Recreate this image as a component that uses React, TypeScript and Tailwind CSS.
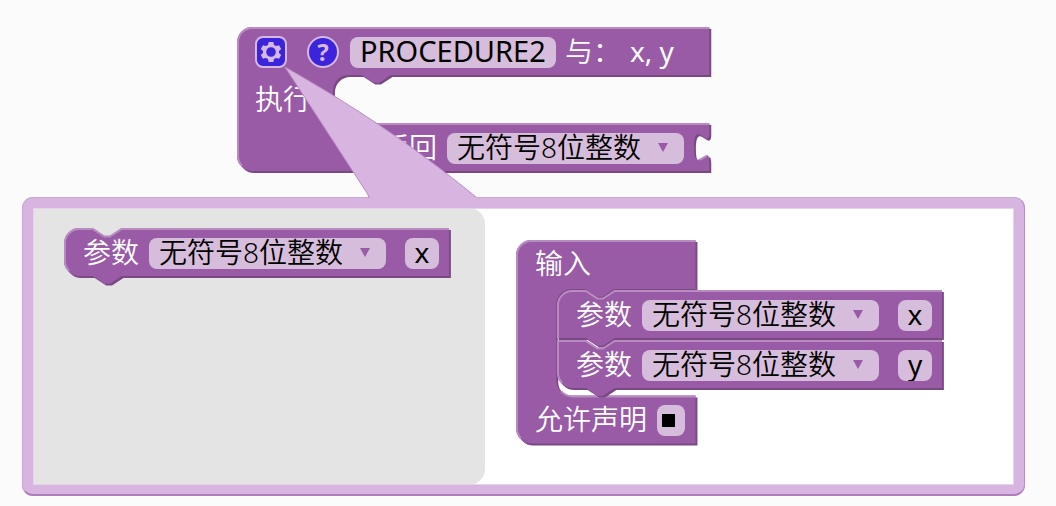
import React from "react";

const FILL = "#995ba5";
const LIGHT = "#b88cc1";
const DARK = "#7a4984";
const UNIT = 1.92;

type ShapeProps = { body: string; light: string };

function BlockShape({ body, light }: ShapeProps) {
  return (
    <svg aria-hidden="true" className="pointer-events-none absolute inset-0 size-full overflow-visible">
      <g transform={`scale(${UNIT})`}>
        <path d={body} fill={DARK} transform="translate(1,1)" />
        <path d={body} fill={FILL} />
        <path d={light} fill="none" stroke={LIGHT} strokeWidth="1" />
      </g>
    </svg>
  );
}

const NOTCH = "l 6,4 3,0 6,-4";
const NOTCH_BACK = "l -6,4 -3,0 -6,-4";
const TAB = "c 0,10 -8,-8 -8,7.5 s 8,-2.5 8,7.5";

const ROUND_PARAM = {
  body: `M 0,8 A 8,8 0 0 1 8,0 H 15 ${NOTCH} H 200.5 V 25 H 30 ${NOTCH_BACK} H 8 A 8,8 0 0 1 0,17 Z`,
  light: `M 2.7,22.3 A 7.5,7.5 0 0 1 0.5,17 V 8 A 7.5,7.5 0 0 1 8,0.5 H 15 ${NOTCH} H 200.5`,
};
const FIRST_PARAM = {
  body: `M 0,8 A 8,8 0 0 1 8,0 H 15 ${NOTCH} H 200.5 V 25 H 30 ${NOTCH_BACK} H 0 Z`,
  light: `M 0.5,25.5 V 8 A 7.5,7.5 0 0 1 8,0.5 H 15 ${NOTCH} H 200.5`,
};
const LAST_PARAM = {
  body: `M 0,0 H 15 ${NOTCH} H 200.5 V 25 H 30 ${NOTCH_BACK} H 8 A 8,8 0 0 1 0,17 Z`,
  light: `M 2.7,22.3 A 7.5,7.5 0 0 1 0.5,17 V 0.5 H 15 ${NOTCH} H 200.5`,
};
const PROCEDURE = {
  body: `M 0,8 A 8,8 0 0 1 8,0 H 246 V 25 H 80 ${NOTCH_BACK} H 58 A 8,8 0 0 0 50,33 V 42 A 8,8 0 0 0 58,50 H 246 v 5 ${TAB} V 75 H 8 A 8,8 0 0 1 0,67 Z`,
  light: `M 2.7,72.3 A 7.5,7.5 0 0 1 0.5,67 V 8 A 7.5,7.5 0 0 1 8,0.5 H 246 M 52.5,47.8 A 8.5,8.5 0 0 0 58,50.5 H 246 M 241,69.2 l 3.7,-2.1`,
};
const CONTAINER = {
  body: `M 0,8 A 8,8 0 0 1 8,0 H 93.5 V 25.5 H 51 ${NOTCH_BACK} H 29 A 8,8 0 0 0 21,33.5 V 73 A 8,8 0 0 0 29,81 H 93.5 V 106 H 8 A 8,8 0 0 1 0,98 Z`,
  light: `M 2.7,103.3 A 7.5,7.5 0 0 1 0.5,98 V 8 A 7.5,7.5 0 0 1 8,0.5 H 93.5 M 23.5,78.7 A 8.5,8.5 0 0 0 29,81.5 H 93.5`,
};

function TypeSelect({ label }: { label: string }) {
  return (
    <span className="relative flex">
      <select
        aria-label={label}
        className="h-[31px] w-[237px] appearance-none rounded-lg bg-[#d6bddb] pb-[3px] pl-[10px] text-[28px] leading-7 text-black outline-none"
      >
        <option>无符号8位整数</option>
      </select>
      <svg aria-hidden="true" viewBox="0 0 10 9" className="pointer-events-none absolute top-[10px] right-4 h-[9px] w-[10px]">
        <path d="M0 0H10L5 9Z" fill="#995ba5" />
      </svg>
    </span>
  );
}

type ParamProps = { name: string; shape: ShapeProps; className?: string };

function ParamBlock({ name, shape, className = "" }: ParamProps) {
  return (
    <div className={`relative flex h-12 w-[387px] items-center pt-[2px] pl-[19px] ${className}`}>
      <BlockShape {...shape} />
      <span className="relative pb-[2px] text-white">参数</span>
      <span className="relative ml-[10px]">
        <TypeSelect label="参数类型" />
      </span>
      <input
        aria-label="参数名"
        defaultValue={name}
        className="relative ml-[19px] h-[31px] w-[34px] rounded-lg bg-[#d6bddb] pb-[3px] text-center text-[28px] leading-7 font-normal text-black outline-none"
      />
    </div>
  );
}

function ProcedureBlock() {
  return (
    <section className="relative flex h-[146px] w-[474px] flex-col">
      <BlockShape {...PROCEDURE} />
      <div className="relative flex h-[50px] items-center pl-[18px]">
        <button aria-label="设置" className="size-8">
          <svg viewBox="0 0 32 32" className="size-8">
            <rect x="1" y="1" width="30" height="30" rx="7" fill="#3c24dc" stroke="#d5b9e3" strokeWidth="2" />
            <g fill="#d5b9e3" transform="translate(16 16)">
              <path
                fillRule="evenodd"
                d="M-2.3-10H2.3L3-7.1 5.2-5.9 8-6.8 10.2-2.9 8-1V1L10.2 2.9 8 6.8 5.2 5.9 3 7.1 2.3 10H-2.3L-3 7.1-5.2 5.9-8 6.8-10.2 2.9-8 1V-1L-10.2-2.9-8-6.8-5.2-5.9-3-7.1ZM0-4.8A4.8 4.8 0 1 0 0 4.8A4.8 4.8 0 1 0 0-4.8Z"
              />
            </g>
          </svg>
        </button>
        <button
          aria-label="帮助"
          className="ml-[20px] flex size-8 items-center justify-center rounded-full border-2 border-[#d5b9e3] bg-[#3c24dc] font-['Noto_Sans'] text-[24px] leading-none font-bold text-[#d5b9e3]"
        >
          ?
        </button>
        <input
          aria-label="函数名"
          defaultValue="PROCEDURE2"
          className="ml-[11px] h-[31px] w-[206px] rounded-lg bg-[#d6bddb] pb-[3px] pl-[10px] text-[29px] leading-7 font-normal text-black outline-none"
        />
        <span className="ml-[9px] pb-[3px] text-white">与：</span>
        <span className="ml-[9px] pb-[3px] font-normal text-white">x, y</span>
      </div>
      <div className="relative flex h-[46px] items-center pb-[2px] pl-[18px] text-white">执行</div>
      <div className="relative flex h-[50px] items-center justify-end pr-[27px]">
        <span className="mr-[10px] pb-[3px] text-white">返回</span>
        <TypeSelect label="返回类型" />
      </div>
    </section>
  );
}

function ContainerBlock() {
  return (
    <div className="relative flex h-[204px] w-[181px] flex-col">
      <BlockShape {...CONTAINER} />
      <div className="relative flex h-[50px] items-center pb-[5px] pl-[19px] text-white">输入</div>
      <div className="relative flex h-[106px] flex-col gap-[2px] pl-[41px]">
        <ParamBlock name="x" shape={FIRST_PARAM} className="shrink-0" />
        <ParamBlock name="y" shape={LAST_PARAM} className="shrink-0" />
      </div>
      <label className="relative flex h-12 items-center gap-[10px] pl-[19px] text-white">
        <span className="pb-[2px]">允许声明</span>
        <span className="flex h-[31px] w-7 items-center rounded-lg bg-[#d6bddb] pl-[5px]">
          <input type="checkbox" defaultChecked className="size-[13px] appearance-none checked:bg-black" />
        </span>
      </label>
    </div>
  );
}

export default function App() {
  return (
    <main className="relative min-h-screen bg-[#fbfbfb] pt-[27px] font-['Noto_Sans','Noto_Sans_CJK_SC',sans-serif] text-[28px] leading-8 font-[350] whitespace-nowrap">
      <div className="pl-[237px]">
        <ProcedureBlock />
      </div>
      <section className="relative mt-6 mr-[31px] ml-[22px] flex h-[299px] rounded-[11px] border-[11px] border-[#d7b5e0] bg-white">
        <div className="w-[452px] shrink-0 rounded-r-2xl bg-[#e4e4e4] pt-[20px] pl-[31px]">
          <ParamBlock name="x" shape={ROUND_PARAM} />
        </div>
        <div className="flex-1 pt-[32px] pl-[31px]">
          <ContainerBlock />
        </div>
        <div aria-hidden="true" className="pointer-events-none absolute inset-0 border border-[#e5d3e9]" />
        <div aria-hidden="true" className="pointer-events-none absolute -inset-[11px] rounded-[11px] border border-b-2 border-t-[#c9a9d2] border-r-[#b98cc4] border-b-[#ad7fb9] border-l-[#cda9d7]" />
      </section>
      <svg aria-hidden="true" className="pointer-events-none absolute top-[60px] left-[280px] h-[150px] w-[210px]">
        <path d="M5 7L87 133Q89 137 89 142H203Q199 140 196 137C130 83 70 44 5 7Z" fill="#d7b5e0" />
        <path d="M5 7L87 133Q89 136 89 138M5 7C70 44 130 83 196 137" fill="none" stroke="#b98cc4" strokeWidth="1" />
      </svg>
    </main>
  );
}
